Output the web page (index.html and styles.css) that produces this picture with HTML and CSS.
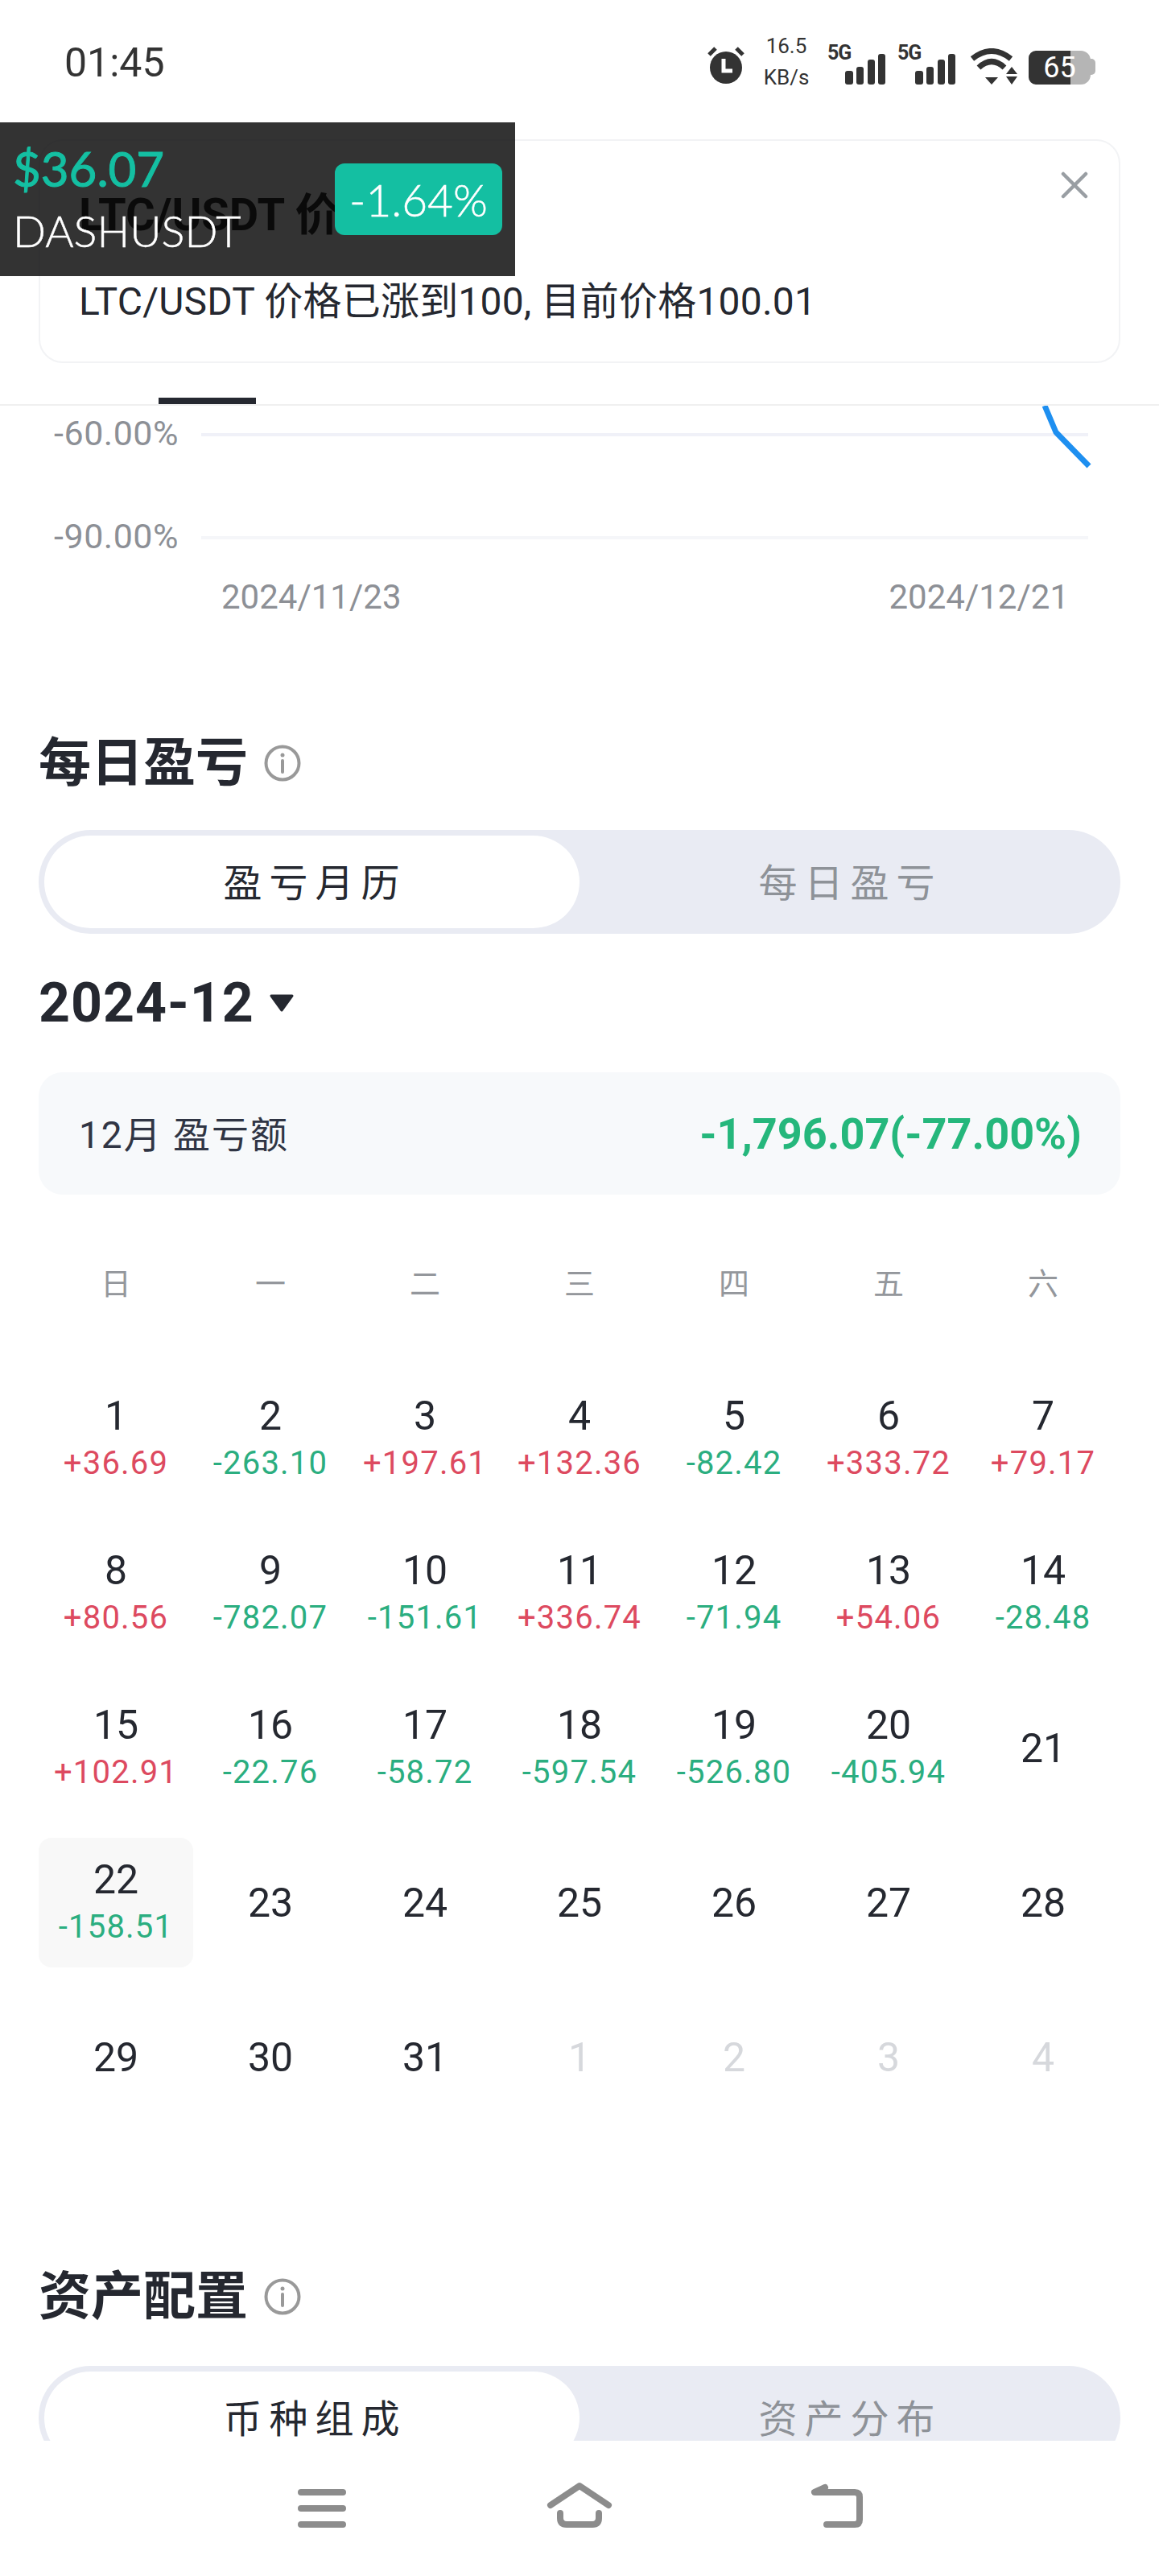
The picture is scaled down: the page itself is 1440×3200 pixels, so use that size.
FILE: index.html
```html
<!DOCTYPE html>
<html lang="zh-CN">
<head>
    <meta charset="UTF-8">
    <meta name="viewport" content="width=device-width, initial-scale=1.0">
    <title>每日盈亏</title>
    <link rel="stylesheet" href="styles.css">
</head>
<body>
    <div class="screen">
        <!-- Status bar -->
        <div class="status-bar">
            <div class="time">01:45</div>
            <div class="status-icons">
                <svg class="alarm" width="46" height="46" viewBox="0 0 46 46">
                    <circle cx="23" cy="26" r="20" fill="#333"/>
                    <path d="M2 10 L10 2 M44 10 L36 2" stroke="#333" stroke-width="5"/>
                    <path d="M20 15 V30 H31" stroke="#fff" stroke-width="5" fill="none"/>
                </svg>
                <div class="speed"><span>16.5</span><span>KB/s</span></div>
                <div class="signal">
                    <span class="signal-label">5G</span>
                    <svg width="50" height="38" viewBox="0 0 50 38">
                        <rect x="0" y="21" width="10" height="17" rx="3" fill="#333"/>
                        <rect x="14" y="16" width="9" height="22" rx="3" fill="#333"/>
                        <rect x="28" y="7" width="9" height="31" rx="3" fill="#333"/>
                        <rect x="41" y="0" width="9" height="38" rx="3" fill="#333"/>
                    </svg>
                </div>
                <div class="signal">
                    <span class="signal-label">5G</span>
                    <svg width="50" height="38" viewBox="0 0 50 38">
                        <rect x="0" y="21" width="10" height="17" rx="3" fill="#333"/>
                        <rect x="14" y="16" width="9" height="22" rx="3" fill="#333"/>
                        <rect x="28" y="7" width="9" height="31" rx="3" fill="#333"/>
                        <rect x="41" y="0" width="9" height="38" rx="3" fill="#333"/>
                    </svg>
                </div>
                <svg class="wifi" width="60" height="46" viewBox="0 0 60 46">
                    <path d="M3 13 Q27 -6 51 13" stroke="#333" stroke-width="7" fill="none"/>
                    <path d="M11 24 Q27 9 43 24" stroke="#333" stroke-width="7" fill="none"/>
                    <path d="M19 36 H35 L27 45 Z" fill="#333"/>
                    <path d="M52 23 L59 32 H45 Z M45 35 H59 L52 45 Z" fill="#333"/>
                </svg>
                <div class="battery"><span>65</span></div>
            </div>
        </div>

        <!-- Page tab line -->
        <div class="page-tabs"><div class="tab-indicator"></div></div>

        <!-- Return chart -->
        <div class="chart">
            <div class="chart-row"><span class="chart-label">-60.00%</span><div class="chart-line"></div></div>
            <div class="chart-row"><span class="chart-label">-90.00%</span><div class="chart-line faint"></div></div>
            <div class="chart-dates"><span>2024/11/23</span><span>2024/12/21</span></div>
            <svg class="chart-curve" width="70" height="90" viewBox="0 0 70 90">
                <path d="M9 0 L23 33 L64 75" stroke="#1e8ff0" stroke-width="7" fill="none"/>
            </svg>
        </div>

        <!-- Daily profit and loss -->
        <h2 class="section-title first">每日盈亏
            <svg class="info" width="46" height="46" viewBox="0 0 46 46">
                <circle cx="23" cy="23" r="20.5" stroke="#999" stroke-width="4" fill="none"/>
                <circle cx="23" cy="13" r="2.5" fill="#999"/>
                <path d="M23 20 V34" stroke="#999" stroke-width="4" stroke-linecap="round"/>
            </svg>
        </h2>
        <div class="segment">
            <div class="segment-item active">盈亏月历</div>
            <div class="segment-item">每日盈亏</div>
        </div>

        <div class="month-picker">2024-12
            <svg width="32" height="24" viewBox="0 0 32 24"><path d="M3 3 H29 L16 21 Z" fill="#252830" stroke="#252830" stroke-width="3" stroke-linejoin="round"/></svg>
        </div>

        <div class="summary">
            <span class="summary-label">12月 盈亏额</span>
            <span class="summary-value">-1,796.07(-77.00%)</span>
        </div>

        <div class="week-row">
            <span>日</span><span>一</span><span>二</span><span>三</span><span>四</span><span>五</span><span>六</span>
        </div>

        <div class="calendar">
            <div class="day"><b>1</b><span class="up">+36.69</span></div>
            <div class="day"><b>2</b><span class="down">-263.10</span></div>
            <div class="day"><b>3</b><span class="up">+197.61</span></div>
            <div class="day"><b>4</b><span class="up">+132.36</span></div>
            <div class="day"><b>5</b><span class="down">-82.42</span></div>
            <div class="day"><b>6</b><span class="up">+333.72</span></div>
            <div class="day"><b>7</b><span class="up">+79.17</span></div>

            <div class="day"><b>8</b><span class="up">+80.56</span></div>
            <div class="day"><b>9</b><span class="down">-782.07</span></div>
            <div class="day"><b>10</b><span class="down">-151.61</span></div>
            <div class="day"><b>11</b><span class="up">+336.74</span></div>
            <div class="day"><b>12</b><span class="down">-71.94</span></div>
            <div class="day"><b>13</b><span class="up">+54.06</span></div>
            <div class="day"><b>14</b><span class="down">-28.48</span></div>

            <div class="day"><b>15</b><span class="up">+102.91</span></div>
            <div class="day"><b>16</b><span class="down">-22.76</span></div>
            <div class="day"><b>17</b><span class="down">-58.72</span></div>
            <div class="day"><b>18</b><span class="down">-597.54</span></div>
            <div class="day"><b>19</b><span class="down">-526.80</span></div>
            <div class="day"><b>20</b><span class="down">-405.94</span></div>
            <div class="day"><b>21</b></div>

            <div class="day today"><b>22</b><span class="down">-158.51</span></div>
            <div class="day"><b>23</b></div>
            <div class="day"><b>24</b></div>
            <div class="day"><b>25</b></div>
            <div class="day"><b>26</b></div>
            <div class="day"><b>27</b></div>
            <div class="day"><b>28</b></div>

            <div class="day"><b>29</b></div>
            <div class="day"><b>30</b></div>
            <div class="day"><b>31</b></div>
            <div class="day muted"><b>1</b></div>
            <div class="day muted"><b>2</b></div>
            <div class="day muted"><b>3</b></div>
            <div class="day muted"><b>4</b></div>
        </div>

        <!-- Asset allocation -->
        <h2 class="section-title second">资产配置
            <svg class="info" width="46" height="46" viewBox="0 0 46 46">
                <circle cx="23" cy="23" r="20.5" stroke="#999" stroke-width="4" fill="none"/>
                <circle cx="23" cy="13" r="2.5" fill="#999"/>
                <path d="M23 20 V34" stroke="#999" stroke-width="4" stroke-linecap="round"/>
            </svg>
        </h2>
        <div class="segment">
            <div class="segment-item active">币种组成</div>
            <div class="segment-item">资产分布</div>
        </div>

        <!-- Price alert -->
        <div class="alert-card">
            <div class="alert-title">LTC/USDT 价格提醒</div>
            <div class="alert-body">LTC/USDT 价格已涨到100, 目前价格100.01</div>
            <svg class="alert-close" width="34" height="34" viewBox="0 0 34 34">
                <path d="M3 3 L31 31 M31 3 L3 31" stroke="#999ea3" stroke-width="4.5" stroke-linecap="round"/>
            </svg>
        </div>

        <!-- Floating ticker -->
        <div class="ticker">
            <div class="ticker-info">
                <div class="ticker-price">$36.07</div>
                <div class="ticker-name">DASHUSDT</div>
            </div>
            <div class="ticker-badge">-1.64%</div>
        </div>

        <!-- System navigation -->
        <div class="nav-bar">
            <svg width="100" height="70" viewBox="0 0 100 70">
                <path d="M24 16 H76 M24 36 H76 M24 56 H76" stroke="#8c8c8c" stroke-width="8" stroke-linecap="round"/>
            </svg>
            <svg width="100" height="70" viewBox="0 0 100 70">
                <path d="M14 32 L50 8 L86 32" stroke="#8c8c8c" stroke-width="8" stroke-linecap="round" stroke-linejoin="round" fill="none"/>
                <path d="M26 42 V48 Q26 56 34 56 H66 Q74 56 74 48 V42" stroke="#8c8c8c" stroke-width="8" stroke-linecap="round" fill="none"/>
            </svg>
            <svg width="100" height="70" viewBox="0 0 100 70">
                <path d="M35 10 L22 16 H72 Q78 16 78 22 V50 Q78 56 72 56 H37" stroke="#8c8c8c" stroke-width="8" stroke-linecap="round" stroke-linejoin="round" fill="none"/>
            </svg>
        </div>
    </div>
</body>
</html>
```

FILE: styles.css
```css
/* Reset */
* {
    margin: 0;
    padding: 0;
    box-sizing: border-box;
}

body {
    font-family: Roboto, "Noto Sans CJK SC", sans-serif;
    background-color: #fff;
    color: #252830;
}

.screen {
    position: relative;
    width: 1440px;
    height: 3200px;
    overflow: hidden;
}

/* Status bar */
.status-bar {
    display: flex;
    justify-content: space-between;
    align-items: center;
    height: 152px;
    padding: 4px 79px 0 80px;
    color: #333;
}

.time {
    font-size: 50px;
    line-height: 60px;
}

.status-icons {
    display: flex;
    align-items: flex-end;
    height: 60px;
}

.alarm {
    margin-bottom: 4px;
}

.speed {
    display: flex;
    flex-direction: column;
    align-items: center;
    width: 56px;
    margin: 0 23px -8px 24px;
    font-size: 26px;
    line-height: 39px;
}

.signal {
    display: flex;
    align-items: flex-start;
    width: 87px;
    height: 50px;
    margin-bottom: 3px;
}

.signal svg {
    margin: 12px 0 0 -7px;
}

.signal-label {
    font-size: 25px;
    line-height: 22px;
    font-weight: 700;
    letter-spacing: -1px;
}

.wifi {
    margin: 0 13px 2px 3px;
}

.battery {
    position: relative;
    display: flex;
    justify-content: center;
    align-items: center;
    width: 77px;
    height: 42px;
    margin: 0 6px 3px 0;
    border-radius: 9px 12px 12px 9px;
    background: linear-gradient(90deg, #333 0, #333 52px, #b5b5b5 52px);
    color: #fff;
    font-size: 36px;
}

/* Battery tip */
.battery::after {
    content: "";
    position: absolute;
    top: 10px;
    right: -6px;
    width: 6px;
    height: 20px;
    border-radius: 0 5px 5px 0;
    background: #b5b5b5;
}

/* Page tab line */
.page-tabs {
    height: 352px;
    padding-left: 197px;
    display: flex;
    align-items: flex-end;
    border-bottom: 2px solid #f0f0f0;
}

.tab-indicator {
    width: 121px;
    height: 8px;
    background: #252830;
}

/* Chart */
.chart {
    position: relative;
    height: 263px;
    padding-top: 6px;
}

.chart-row {
    display: flex;
    align-items: center;
    height: 60px;
    margin-bottom: 68px;
    padding: 0 88px 0 48px;
}

.chart-label {
    width: 174px;
    margin-right: 28px;
    padding-bottom: 4px;
    text-align: right;
    color: #8d9096;
    font-size: 43px;
    letter-spacing: 0.5px;
}

.chart-line {
    flex: 1;
    height: 4px;
    background: #f0f1f8;
}

.chart-line.faint {
    background: #f5f6f9;
}

.chart-dates {
    display: flex;
    justify-content: space-between;
    margin-top: -49px;
    padding: 0 112px 0 275px;
    color: #8d9096;
    font-size: 42px;
    line-height: 50px;
}

.chart-curve {
    position: absolute;
    top: 0;
    left: 1289px;
}

/* Section headings */
.section-title {
    display: flex;
    align-items: center;
    gap: 20px;
    height: 70px;
    padding-left: 48px;
    font-size: 65px;
    font-weight: 600;
    line-height: 70px;
}

.section-title.first {
    margin-top: 146px;
}

.section-title.second {
    margin-top: 182px;
}

/* Segmented control */
.segment {
    display: flex;
    height: 129px;
    margin: 48px 48px 0;
    padding: 7px;
    border-radius: 65px;
    background: #e9ebf3;
}

.section-title.second + .segment {
    margin-top: 51px;
}

.segment-item {
    flex: 1;
    display: flex;
    justify-content: center;
    align-items: center;
    padding: 0 0 6px 8px;
    border-radius: 58px;
    color: #8e9298;
    font-size: 48px;
    letter-spacing: 9px;
}

.segment-item.active {
    background: #fff;
    color: #252830;
}

/* Month picker */
.month-picker {
    display: flex;
    align-items: center;
    gap: 18px;
    height: 80px;
    margin-top: 46px;
    padding-left: 48px;
    font-size: 68px;
    font-weight: 700;
    letter-spacing: 1px;
}

/* Summary */
.summary {
    display: flex;
    justify-content: space-between;
    align-items: center;
    height: 152px;
    margin: 46px 48px 0;
    padding: 0 48px 0 50px;
    border-radius: 30px;
    background: #f7f9fb;
}

.summary-label {
    padding-bottom: 4px;
    color: #303544;
    font-size: 46px;
    letter-spacing: 2px;
}

.summary-value {
    color: #25b77c;
    font-size: 54px;
    font-weight: 700;
}

/* Calendar */
.week-row {
    display: grid;
    grid-template-columns: repeat(7, 192px);
    height: 60px;
    margin: 81px 48px 0;
    color: #94979c;
    font-size: 38px;
    line-height: 60px;
    text-align: center;
}

.calendar {
    display: grid;
    grid-template-columns: repeat(7, 192px);
    grid-auto-rows: 161px;
    row-gap: 31px;
    margin: 82px 48px 0;
}

.day {
    display: flex;
    flex-direction: column;
    justify-content: center;
    align-items: center;
    border-radius: 16px;
}

.day b {
    font-size: 50px;
    font-weight: 400;
    line-height: 60px;
}

.day span {
    font-size: 40px;
    line-height: 58px;
    letter-spacing: 1.2px;
}

.day .up {
    color: #dd4a60;
}

.day .down {
    color: #2bae80;
}

.day.today {
    background: #f8f8f8;
}

.day.muted {
    color: #d6d8dc;
}

/* Alert card */
.alert-card {
    position: absolute;
    top: 173px;
    left: 48px;
    width: 1344px;
    height: 278px;
    padding: 62px 48px 0;
    border: 2px solid #f2f3f5;
    border-radius: 30px;
    background: #fff;
}

.alert-title {
    color: #111;
    font-size: 56px;
    font-weight: 700;
    line-height: 60px;
}

.alert-body {
    margin-top: 48px;
    font-size: 48px;
    line-height: 60px;
    letter-spacing: 0.2px;
}

.alert-close {
    position: absolute;
    top: 38px;
    right: 38px;
}

/* Floating ticker */
.ticker {
    position: absolute;
    top: 152px;
    left: 0;
    display: flex;
    justify-content: space-between;
    align-items: center;
    width: 640px;
    height: 191px;
    padding: 0 16px 0 16px;
    background: rgba(10, 10, 10, 0.83);
    font-family: Lato, sans-serif;
}

.ticker-price {
    color: #14bfa2;
    font-size: 60px;
    line-height: 70px;
    -webkit-text-stroke: 1px #14bfa2;
}

.ticker-name {
    margin-top: 8px;
    color: #fff;
    font-size: 54px;
    font-weight: 300;
    line-height: 70px;
    -webkit-text-stroke: 0.5px #fff;
}

.ticker-badge {
    display: flex;
    justify-content: center;
    align-items: center;
    width: 208px;
    height: 89px;
    border-radius: 12px;
    background: #14bfa2;
    color: #fff;
    font-size: 55px;
    font-weight: 300;
    -webkit-text-stroke: 0.5px #fff;
}

/* System navigation */
.nav-bar {
    position: absolute;
    top: 3032px;
    left: 0;
    display: flex;
    justify-content: center;
    gap: 220px;
    width: 1440px;
    height: 168px;
    padding-top: 48px;
    background: #fff;
}
```
